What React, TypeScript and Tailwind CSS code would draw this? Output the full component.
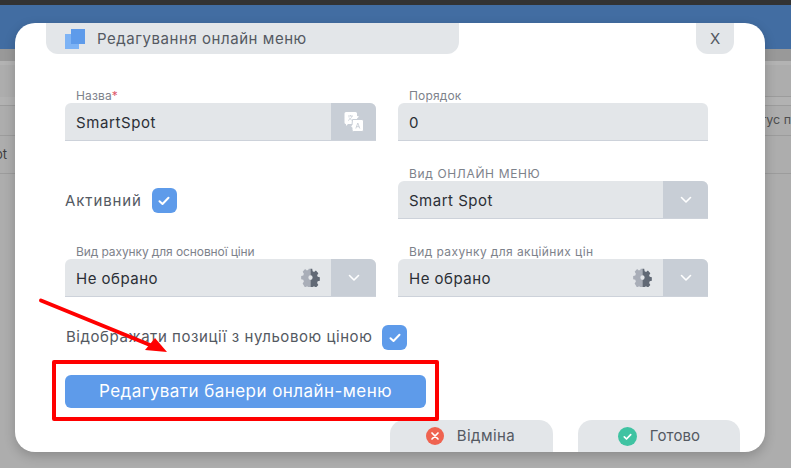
const F = "font-['Inter','Noto_Sans',sans-serif]";

function Label({ children, className = "tracking-[0.15px]" }: { children: React.ReactNode; className?: string }) {
  return <div className={`h-[15px] pl-[11px] text-[12px] leading-[15px] text-[#7d828b] whitespace-nowrap ${className}`}>{children}</div>;
}

function Chevron() {
  return (
    <svg width="12" height="8" viewBox="0 0 12 8" fill="none">
      <path d="M1.5 1.5 6 6l4.5-4.5" stroke="#fff" strokeWidth="1.6" strokeLinecap="round" strokeLinejoin="round" />
    </svg>
  );
}

const gearPath = "M9.6 1h4.8l.6 3 2 .9 2.6-1.7 3.4 3.4-1.7 2.6.8 2 3 .6v4.4l-3 .6-.8 2 1.7 2.6-3.4 3.4-2.6-1.7-2 .8-.6 3H9.6l-.6-3-2-.8-2.6 1.7L1 19.5l1.7-2.6-.8-2-3-.6V10l3-.6.8-2L1 4.8l3.4-3.4L7 3.1l2-.9zM12 9a3 3 0 1 0 0 6 3 3 0 0 0 0-6z";

function Gear({ id }: { id: string }) {
  return (
    <svg width="19" height="19" viewBox="0 0 24 24">
      <defs>
        <clipPath id={`${id}l`}><rect x="0" y="0" width="12" height="24" /></clipPath>
        <clipPath id={`${id}r`}><rect x="12" y="0" width="12" height="24" /></clipPath>
      </defs>
      <g clipPath={`url(#${id}l)`}>
        <path fill="#a9aeb8" fillRule="evenodd" d={gearPath} transform="translate(1.2 0) scale(.9 1)" />
      </g>
      <g clipPath={`url(#${id}r)`}>
        <path fill="#616975" fillRule="evenodd" d={gearPath} transform="translate(1.2 0) scale(.9 1)" />
      </g>
    </svg>
  );
}

function Translate() {
  return (
    <svg width="20" height="20" viewBox="0 0 20 20">
      <path d="M0.5 1.5A1.5 1.5 0 0 1 2 0h9.5A1.5 1.5 0 0 1 13 1.5V4l2 .5-2 2V12H4l-2 2v-2H2A1.5 1.5 0 0 1 .5 10.5z" fill="#fff" />
      <path d="M8.5 7.5h9.5A1.5 1.5 0 0 1 19.5 9v9A1.5 1.5 0 0 1 18 19.5H9.5A1.5 1.5 0 0 1 8 18v-2.500L6 14l2-1z" fill="#fff" stroke="#c8ced6" strokeWidth="1" />
      <path d="M11.800 16.500l2-5.500 2 5.500M12.600 14.700h2.500" stroke="#c8ced6" strokeWidth="0.900" fill="none" />
      <path d="M4 4h5M6.500 3v1M8 4c-.5 2-2 3.500-4 4.500M5 5.500c.7 1.300 1.800 2.300 3.500 3" stroke="#c8ced6" strokeWidth="0.800" fill="none" />
    </svg>
  );
}

function Check() {
  return (
    <div className="flex h-[25px] w-[25px] shrink-0 items-center justify-center rounded-[6px] bg-[#5e9bea]">
      <svg width="12" height="10" viewBox="0 0 12 10" fill="none">
        <path d="M1.500 5.200 4.500 8l6-6.200" stroke="#fff" strokeWidth="2" strokeLinecap="round" strokeLinejoin="round" />
      </svg>
    </div>
  );
}

function Select({ text, gear, id = "g" }: { text: string; gear?: boolean; id?: string }) {
  return (
    <div className="flex h-[38px] overflow-hidden rounded-t-[6px] border-b border-[#cdd2da] bg-[#e3e6e9]">
      <div className="flex-1 pl-[11px] text-[15px] leading-[39px] tracking-[0.5px] text-[#2b2f36]">{text}</div>
      {gear && <div className="mr-[11px] flex items-center"><Gear id={id} /></div>}
      <div className="flex w-[45px] items-center justify-center bg-[#c8ced6]"><Chevron /></div>
    </div>
  );
}

export default function App() {
  return (
    <div className={`relative h-[468px] w-[791px] overflow-hidden bg-[#adadad] ${F}`}>
      <div className="h-[5px] bg-[#333333]" />
      <div className="h-[44px] bg-[#426da2]" />
      <div className="h-[12px] bg-[#999999]" />
      <div className="h-[4px] bg-[#b3b3b3]" />
      <div className="ml-auto h-[32px] w-[40px] border-b border-[#9c9c9c]" />
      <div className="h-[9px] border-b border-[#9c9c9c] bg-[#b2b2b2]" />
      <div className="flex h-[30px] items-center justify-end border-b border-[#9c9c9c]">
        <span className="text-[12.5px] text-[#4d4d4d] whitespace-nowrap">тус п</span>
      </div>
      <div className="flex h-[38px] items-center border-b border-[#9c9c9c] text-[13px] text-[#3d3d3d]">
        <span className="-ml-[5px]">ot</span>
      </div>

      {/* modal */}
      <div className="absolute left-[15px] top-[23px] flex h-[429px] w-[750px] flex-col rounded-[20px] bg-white shadow-[0_4px_12px_rgba(0,0,0,0.2)]">
        <div className="flex h-[31px] shrink-0 justify-between px-[31px]">
          <div className="flex w-[413px] items-center gap-[12px] rounded-b-[12px] bg-[#e3e6e9] pl-[19px]">
            <div className="relative h-[20px] w-[20px]">
              <div className="absolute bottom-0 left-0 h-[15px] w-[14px] bg-[#7db3f5]" />
              <div className="absolute right-0 top-0 h-[15px] w-[14px] bg-[#5e9bea]" />
            </div>
            <span className="pt-[2px] text-[15px] tracking-[0.55px] text-[#545962] whitespace-nowrap">Редагування онлайн меню</span>
          </div>
          <div className="flex w-[38px] items-center justify-center rounded-b-[12px] bg-[#e3e6e9] pt-[1px] text-[15px] text-[#545962]">X</div>
        </div>

        <div className="mt-[34px] grid grid-cols-[311px_310px] gap-x-[22px] pl-[50px]">
          <div>
            <Label>Назва<span className="text-[#e0596b]">*</span></Label>
            <div className="flex h-[38px] overflow-hidden rounded-t-[6px] border-b border-[#cdd2da] bg-[#e3e6e9]">
              <div className="flex-1 pl-[11px] text-[15px] leading-[39px] tracking-[0.6px] text-[#2b2f36]">SmartSpot</div>
              <div className="flex w-[45px] items-center justify-center bg-[#c8ced6]"><Translate /></div>
            </div>
          </div>
          <div>
            <Label>Порядок</Label>
            <div className="h-[38px] rounded-t-[6px] border-b border-[#cdd2da] bg-[#e3e6e9] pl-[11px] text-[15px] leading-[39px] text-[#2b2f36]">0</div>
          </div>

          <div className="mt-[25px] flex h-[53px] items-end pb-[6px]">
            <span className="mr-[10px] pb-[1px] text-[15px] tracking-[0.9px] text-[#545962]">Активний</span>
            <Check />
          </div>
          <div className="mt-[25px]">
            <Label className="tracking-[0.65px]">Вид ОНЛАЙН МЕНЮ</Label>
            <Select text="Smart Spot" />
          </div>

          <div className="mt-[25px]">
            <Label className="-tracking-[0.1px]">Вид рахунку для основної ціни</Label>
            <Select text="Не обрано" gear id="a" />
          </div>
          <div className="mt-[25px]">
            <Label className="tracking-[0.4px]">Вид рахунку для акційних цін</Label>
            <Select text="Не обрано" gear id="b" />
          </div>
        </div>

        <div className="ml-[51px] mt-[28px] flex items-center gap-[10px]">
          <span className="text-[15px] tracking-[0.56px] text-[#545962] whitespace-nowrap">Відображати позиції з нульовою ціною</span>
          <Check />
        </div>

        <div className="ml-[50px] mt-[25px] flex h-[33px] w-[361px] items-center justify-center rounded-[6px] bg-[#5e9bea] text-[17px] tracking-[0.45px] text-white">
          Редагувати банери онлайн-меню
        </div>

        <div className="mt-auto flex justify-end gap-[25px] pr-[25px]">
          <div className="flex h-[32px] w-[163px] items-center justify-center gap-[13px] rounded-t-[14px] bg-[#e3e6e9]">
            <svg width="18" height="18" viewBox="0 0 18 18" className="-ml-[2px]">
              <circle cx="9" cy="9" r="9" fill="#ef6350" />
              <path d="M6 6l6 6M12 6l-6 6" stroke="#fff" strokeWidth="1.700" strokeLinecap="round" />
            </svg>
            <span className="text-[15px] tracking-[0.45px] text-[#545962]">Відміна</span>
          </div>
          <div className="flex h-[32px] w-[162px] items-center justify-center gap-[13px] rounded-t-[14px] bg-[#e3e6e9]">
            <svg width="19" height="19" viewBox="0 0 19 19">
              <circle cx="9.500" cy="9.500" r="9.500" fill="#3fc3a2" />
              <path d="M6.300 9.800 8.500 12l4.200-4.400" stroke="#fff" strokeWidth="1.700" fill="none" strokeLinecap="round" strokeLinejoin="round" />
            </svg>
            <span className="text-[15px] tracking-[0.1px] text-[#545962]">Готово</span>
          </div>
        </div>
      </div>

      {/* annotation */}
      <div className="absolute left-[52px] top-[360px] h-[61px] w-[387px] rounded-[2px] border-[4px] border-[#ff0000]" />
      <svg className="absolute left-0 top-0" width="791" height="468" viewBox="0 0 791 468" fill="none">
        <path d="M41 300.500 150 345" stroke="#ff0000" strokeWidth="4" strokeLinecap="round" />
        <path d="M167 352 145 350 155 338z" fill="#ff0000" />
      </svg>
    </div>
  );
}
